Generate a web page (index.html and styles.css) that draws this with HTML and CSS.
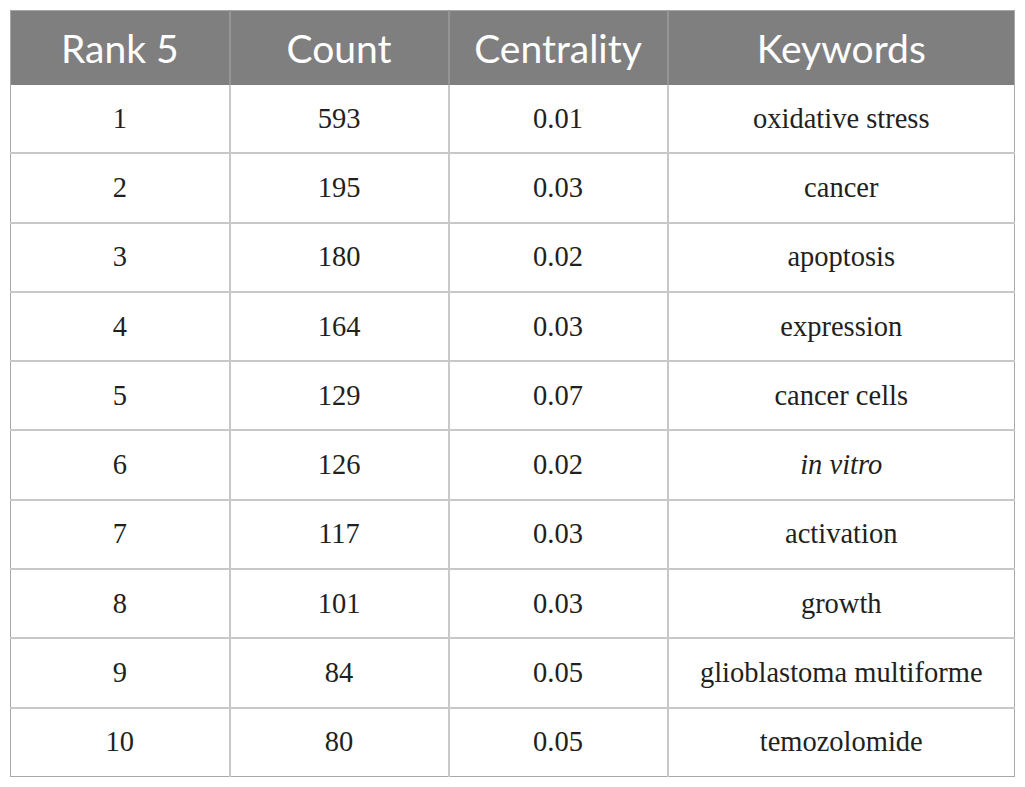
FILE: index.html
```html
<!DOCTYPE html>
<html>
<head>
<meta charset="utf-8">
<link rel="stylesheet" href="styles.css">
</head>
<body>
<table class="data">
  <colgroup>
    <col class="c1"><col class="c2"><col class="c3"><col class="c4">
  </colgroup>
  <thead>
    <tr><th>Rank 5</th><th>Count</th><th>Centrality</th><th>Keywords</th></tr>
  </thead>
  <tbody>
    <tr><td>1</td><td>593</td><td>0.01</td><td>oxidative stress</td></tr>
    <tr><td>2</td><td>195</td><td>0.03</td><td>cancer</td></tr>
    <tr><td>3</td><td>180</td><td>0.02</td><td>apoptosis</td></tr>
    <tr><td>4</td><td>164</td><td>0.03</td><td>expression</td></tr>
    <tr><td>5</td><td>129</td><td>0.07</td><td>cancer cells</td></tr>
    <tr><td>6</td><td>126</td><td>0.02</td><td><em>in vitro</em></td></tr>
    <tr><td>7</td><td>117</td><td>0.03</td><td>activation</td></tr>
    <tr><td>8</td><td>101</td><td>0.03</td><td>growth</td></tr>
    <tr><td>9</td><td>84</td><td>0.05</td><td>glioblastoma multiforme</td></tr>
    <tr><td>10</td><td>80</td><td>0.05</td><td>temozolomide</td></tr>
  </tbody>
</table>
</body>
</html>
```
FILE: styles.css
```css
html, body {
  margin: 0;
  padding: 0;
  background: #ffffff;
}
body {
  padding: 10px;
}
.data {
  border-collapse: collapse;
  table-layout: fixed;
  width: 1005px;
  border: 1px solid #a8a8a8;
}
.c1, .c2, .c3 { width: 219px; }
.data th {
  height: 74px;
  background: #7f7f7f;
  color: #ffffff;
  font-family: Lato, "Open Sans", sans-serif;
  font-weight: 400;
  font-size: 39px;
  padding: 0;
  text-align: center;
  border-left: 2px solid #959595;
}
.data th:first-child { border-left: none; }
.data td {
  height: 67.3px;
  padding: 0;
  text-align: center;
  font-family: "Liberation Serif", serif;
  font-size: 28.5px;
  color: #231f20;
  border-top: 2px solid #c8c8c8;
  border-left: 2px solid #c8c8c8;
}
.data td:first-child { border-left: none; }
.data tbody tr:first-child td { border-top: none; }
.data em { font-style: italic; }
```
